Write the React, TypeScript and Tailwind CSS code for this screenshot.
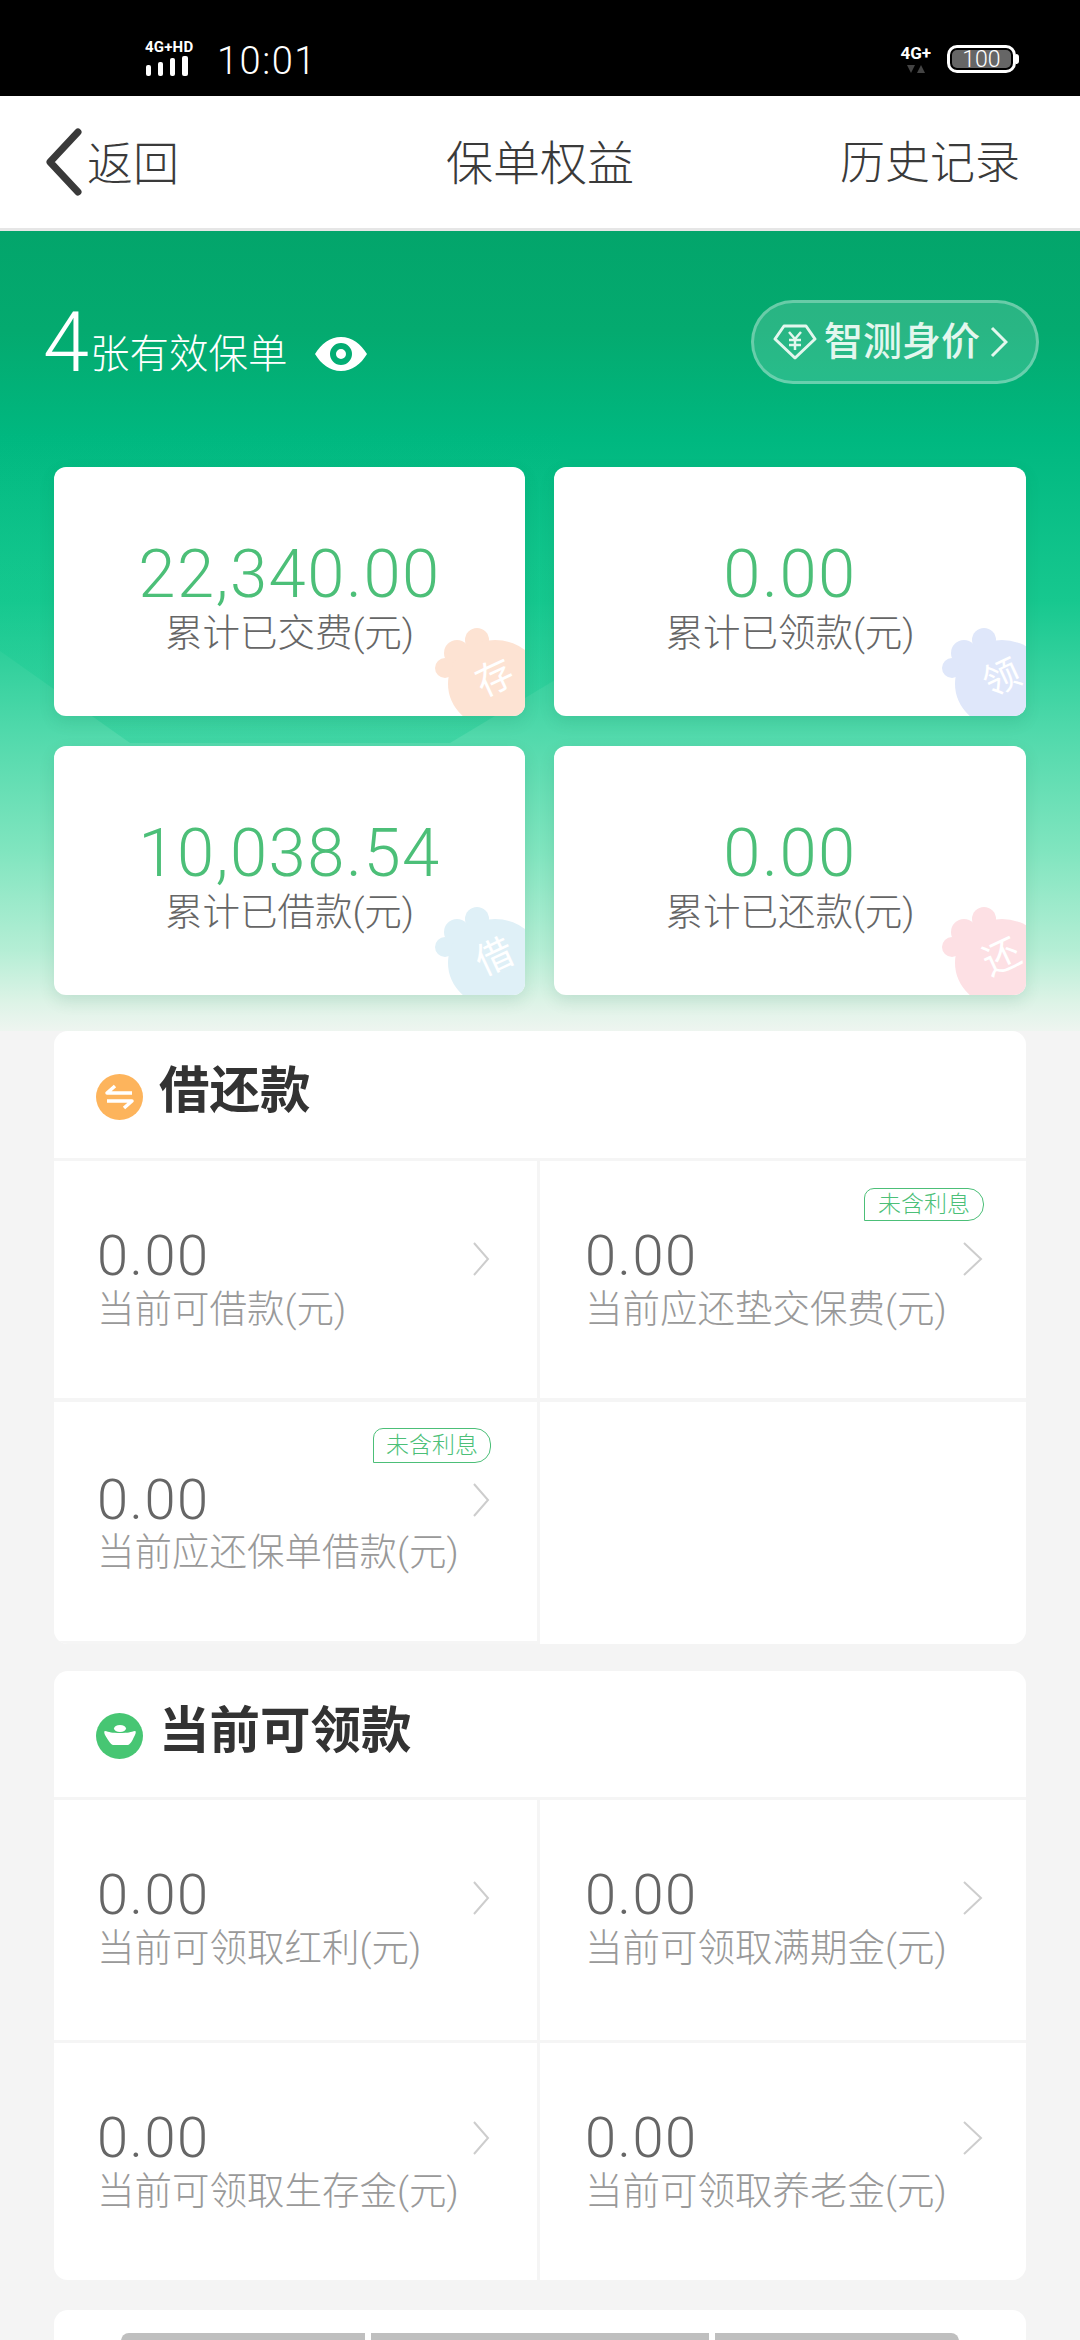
const CJK = "font-['Roboto','Noto_Sans_CJK_SC',sans-serif]";

function SignalIcon() {
  return (
    <svg width="43" height="20" viewBox="0 0 43 20" fill="#fff">
      <rect x="1" y="9" width="5" height="11" rx="2" />
      <rect x="13" y="6" width="5" height="14" rx="2" />
      <rect x="25" y="2" width="5" height="18" rx="2" />
      <rect x="37" y="0" width="6" height="20" rx="2" />
    </svg>
  );
}

function StatusBar() {
  return (
    <div className={`flex h-24 bg-black text-white ${CJK}`}>
      <div className="ml-[145px] mt-[41px] flex h-[35px] w-[58px] flex-col">
        <div className="mb-[2px] whitespace-nowrap text-[15px] font-bold leading-[13px] tracking-[0.2px]">4G+HD</div>
        <SignalIcon />
      </div>
      <div className="ml-[14px] mt-[42px] text-[38px] font-light leading-none tracking-[1.5px]">10:01</div>
      <div className="ml-[582px] mt-[45px] flex w-[34px] flex-col items-center">
        <div className="text-[17px] font-bold leading-[17px]">4G+</div>
        <svg className="mt-[3px]" width="18" height="9" viewBox="0 0 18 9" fill="#444">
          <path d="M0 0h8L4 8zM10 8l4-8 4 8z" />
        </svg>
      </div>
      <div className="ml-[14px] mt-[45px] flex h-[28px] w-[69px] items-center rounded-[10px] border-[3px] border-white p-[2px]">
        <div className="flex h-full w-full items-center justify-center rounded-[5px] bg-[#666] text-[23px] font-light leading-none">100</div>
      </div>
      <div className="mt-[54px] h-[10px] w-[3px] rounded-r-sm bg-white" />
    </div>
  );
}

function TopBar() {
  return (
    <div className={`relative flex h-[135px] items-center justify-between border-b-[3px] border-[#e6e6e6] bg-white pl-[45px] pr-[60px] text-[#3a3a3a] ${CJK}`}>
      <div className="flex items-center">
        <svg width="38" height="68" viewBox="0 0 38 68" fill="none" stroke="#3a3a3a" strokeWidth="7" strokeLinecap="round" strokeLinejoin="round">
          <path d="M33 4 5 34l28 30" />
        </svg>
        <span className="ml-[4px] mt-[3px] text-[46px] font-light leading-none">返回</span>
      </div>
      <span className="absolute left-1/2 top-[44px] -translate-x-1/2 text-[47px] font-light leading-none">保单权益</span>
      <span className="mt-[3px] text-[45px] font-light leading-none">历史记录</span>
    </div>
  );
}

function EyeIcon() {
  return (
    <svg width="52" height="34" viewBox="0 0 52 34">
      <path
        fillRule="evenodd"
        fill="#fff"
        d="M26 0c11 0 20 7 26 17-6 10-15 17-26 17S6 27 0 17C6 7 15 0 26 0zm0 6a11 11 0 1 0 0 22 11 11 0 0 0 0-22zm0 6a5 5 0 1 1 0 10 5 5 0 0 1 0-10z"
      />
    </svg>
  );
}

function DiamondIcon() {
  return (
    <svg width="44" height="36" viewBox="0 0 44 36" fill="none" stroke="#e3f7ee" strokeWidth="3" strokeLinejoin="round">
      <path d="M11 2h22l9 13-20 19L2 15z" />
      <path strokeWidth="2.5" d="M16 8l6 7 6-7M22 15v11M16 16h12M16 21h12" />
    </svg>
  );
}

function Paw({ color, char, shift }: { color: string; char: string; shift: boolean }) {
  return (
    <div className={shift ? "absolute bottom-[-2px] right-[-6px] h-[90px] w-[90px]" : "absolute bottom-[-2px] right-0 h-[90px] w-[90px]"}>
      <svg width="108" height="90" viewBox="0 0 108 90" fill={color}>
        <circle cx="42" cy="12" r="12" />
        <circle cx="22" cy="25" r="13" />
        <circle cx="10" cy="40" r="10" />
        <ellipse cx="60" cy="56" rx="47" ry="44" />
      </svg>
      <span className="absolute left-[40px] top-[29px] rotate-[-25deg] font-['Noto_Sans_CJK_SC',sans-serif] text-[37px] leading-none text-white">{char}</span>
    </div>
  );
}

function StatCard({ value, label, color, char, shift }: { value: string; label: string; color: string; char: string; shift?: boolean }) {
  return (
    <div className={`relative flex h-[249px] flex-col items-center overflow-hidden rounded-[12px] bg-white pt-[74px] shadow-[0_6px_16px_rgba(0,90,60,0.12)] ${CJK}`}>
      <div className="text-[67px] font-light leading-none tracking-[1.5px] text-[#4cbf78]">{value}</div>
      <div className="mt-[7px] text-[37.5px] font-light leading-none text-[#666]">{label}</div>
      <Paw color={color} char={char} shift={!!shift} />
    </div>
  );
}

function Chevron({ wide, high }: { wide?: boolean; high?: boolean }) {
  const pos = wide ? "right-[43px]" : "right-[47px]";
  return (
    <svg
      className={`absolute ${pos} ${high ? "top-[78px]" : "top-[81px]"}`}
      width={wide ? 20 : 17}
      height="34"
      viewBox={wide ? "0 0 20 34" : "0 0 17 34"}
      fill="none"
      stroke="#cdcdcd"
      strokeWidth="2"
    >
      <path d={wide ? "M1 1l17 16L1 33" : "M1 1l14 16L1 33"} />
    </svg>
  );
}

function Tag({ right }: { right: boolean }) {
  return (
    <div
      className={
        right
          ? "absolute right-[42px] top-[27px] flex h-[33px] w-[120px] items-center justify-center rounded-tl-[10px] rounded-r-[16px] border-[1.5px] border-[#4cbf78] text-[23px] font-light leading-none text-[#4cbf78]"
          : "absolute right-[46px] top-[26px] flex h-[35px] w-[118px] items-center justify-center rounded-tl-[10px] rounded-r-[16px] border-[1.5px] border-[#4cbf78] text-[23px] font-light leading-none text-[#4cbf78]"
      }
    >
      未含利息
    </div>
  );
}

interface CellProps {
  value?: string;
  label?: string;
  right?: boolean;
  tag?: boolean;
  low?: boolean;
  high?: boolean;
  className?: string;
}

function Cell({ value, label, right, tag, low, high, className = "" }: CellProps) {
  return (
    <div className={`relative bg-white ${right ? "pl-[45px]" : "pl-[43px]"} ${className} ${CJK}`}>
      {tag && <Tag right={!!right} />}
      {value && (
        <>
          <div className={`${low ? "mt-[70px]" : "mt-[67px]"} text-[56px] font-light leading-none tracking-[1.5px] text-[#666]`}>{value}</div>
          <div className={`${low ? "mt-[6px]" : "mt-[7px]"} whitespace-nowrap text-[37.5px] font-light leading-none text-[#999]`}>{label}</div>
          <Chevron wide={right} high={high} />
        </>
      )}
    </div>
  );
}

function ExchangeIcon() {
  return (
    <svg width="47" height="46" viewBox="0 0 47 46">
      <ellipse cx="23.5" cy="23" rx="23.5" ry="23" fill="#fdb45c" />
      <path d="M36 19H11l8-7M11 27h25l-8 7" fill="none" stroke="#fff" strokeWidth="3.5" strokeLinejoin="round" />
    </svg>
  );
}

function IngotIcon() {
  return (
    <svg width="47" height="46" viewBox="0 0 47 46">
      <ellipse cx="23.5" cy="23" rx="23.5" ry="23" fill="#47c673" />
      <ellipse cx="24" cy="15.5" rx="6" ry="3.5" fill="#fff" />
      <path d="M9 18c4 1 7 2 15 2s11-1 15-2c1 0 1 2 0 4-2 4-4 9-7 10H17c-3-1-6-7-8-10-1-2-1-4 0-4z" fill="#fff" />
    </svg>
  );
}

function SectionHead({ icon, title, height, iconTop }: { icon: React.ReactNode; title: string; height: string; iconTop: string }) {
  return (
    <div className={`flex border-b-[3px] border-[#f5f5f5] pl-[42px] ${height}`}>
      <div className={iconTop}>{icon}</div>
      <div className="ml-[16px] mt-[30px] font-['Noto_Sans_CJK_SC',sans-serif] text-[50.5px] font-bold leading-none text-[#333]">{title}</div>
    </div>
  );
}

export default function App() {
  return (
    <div className="h-[2340px] w-[1080px] overflow-hidden bg-[#f4f4f4]">
      <StatusBar />
      <TopBar />

      <div className="relative h-[800px] overflow-hidden bg-[linear-gradient(180deg,#03a56b_0px,#04aa6f_100px,#00b880_209px,#17c88f_370px,#50d9ab_500px,#80e5bf_620px,#b5eed5_720px,#dcf3e6_770px,#eef5f0_800px)] px-[54px]">
        <svg className="absolute left-0 top-[200px]" width="560" height="340" viewBox="0 0 560 340">
          <defs>
            <linearGradient id="shade" x1="0" y1="0" x2="0" y2="1">
              <stop offset="0" stopColor="#10c98f" stopOpacity="0" />
              <stop offset="0.75" stopColor="#10c98f" stopOpacity="0.3" />
            </linearGradient>
          </defs>
          <path d="M0 220 130 312h320l110-66V0H0z" fill="url(#shade)" />
        </svg>
        <div className="relative flex items-start justify-between">
          <div className={`ml-[-11px] mt-[80px] flex items-end text-white ${CJK}`}>
            <span className="text-[83px] font-light leading-[64px]">4</span>
            <span className="ml-[1px] text-[39.5px] font-light leading-[40px]">张有效保单</span>
            <span className="mb-[4px] ml-[27px]"><EyeIcon /></span>
          </div>
          <div className={`mr-[-13px] mt-[69px] flex h-[84px] w-[288px] items-center rounded-full border-[3px] border-white/30 bg-white/15 pl-[19px] text-[#e3f7ee] ${CJK}`}>
            <DiamondIcon />
            <span className="ml-[7px] whitespace-nowrap text-[39px] font-medium leading-none">智测身价</span>
            <svg className="ml-[10px]" width="18" height="32" viewBox="0 0 18 32" fill="none" stroke="#e3f7ee" strokeWidth="3">
              <path d="M2 2l14 14L2 30" />
            </svg>
          </div>
        </div>

        <div className="relative mt-[83px] grid grid-cols-[471px_472px] gap-x-[29px] gap-y-[30px]">
          <StatCard value="22,340.00" label="累计已交费(元)" color="#fde3d3" char="存" />
          <StatCard value="0.00" label="累计已领款(元)" color="#dfe7fa" char="领" shift />
          <StatCard value="10,038.54" label="累计已借款(元)" color="#dff0f7" char="借" />
          <StatCard value="0.00" label="累计已还款(元)" color="#fde0e4" char="还" shift />
        </div>
      </div>

      <div className="mx-[54px] overflow-hidden rounded-[14px] bg-white">
        <SectionHead icon={<ExchangeIcon />} title="借还款" height="h-[130px]" iconTop="mt-[43px]" />
        <div className="grid grid-cols-[483px_1fr] grid-rows-[237px_242px] gap-x-[3px] gap-y-[4px] bg-[#f5f5f5]">
          <Cell value="0.00" label="当前可借款(元)" />
          <Cell value="0.00" label="当前应还垫交保费(元)" right tag />
          <Cell value="0.00" label="当前应还保单借款(元)" tag low className="h-[239px]" />
          <Cell right />
        </div>
      </div>

      <div className="mx-[54px] mt-[27px] overflow-hidden rounded-[14px] bg-white">
        <SectionHead icon={<IngotIcon />} title="当前可领款" height="h-[129px]" iconTop="mt-[42px]" />
        <div className="grid grid-cols-[483px_1fr] grid-rows-[240px_237px] gap-x-[3px] gap-y-[3px] bg-[#f5f5f5]">
          <Cell value="0.00" label="当前可领取红利(元)" />
          <Cell value="0.00" label="当前可领取满期金(元)" right />
          <Cell value="0.00" label="当前可领取生存金(元)" high />
          <Cell value="0.00" label="当前可领取养老金(元)" right high />
        </div>
      </div>

      <div className="mx-[54px] mt-[30px] h-[60px] rounded-[14px] bg-white pl-[67px] pt-[23px]">
        <div className="flex gap-[6px]">
          <div className="h-[60px] w-[244px] rounded-l-[8px] bg-[#bfbfbf]" />
          <div className="h-[60px] w-[338px] bg-[#bfbfbf]" />
          <div className="h-[60px] w-[244px] rounded-r-[8px] bg-[#bfbfbf]" />
        </div>
      </div>
    </div>
  );
}
